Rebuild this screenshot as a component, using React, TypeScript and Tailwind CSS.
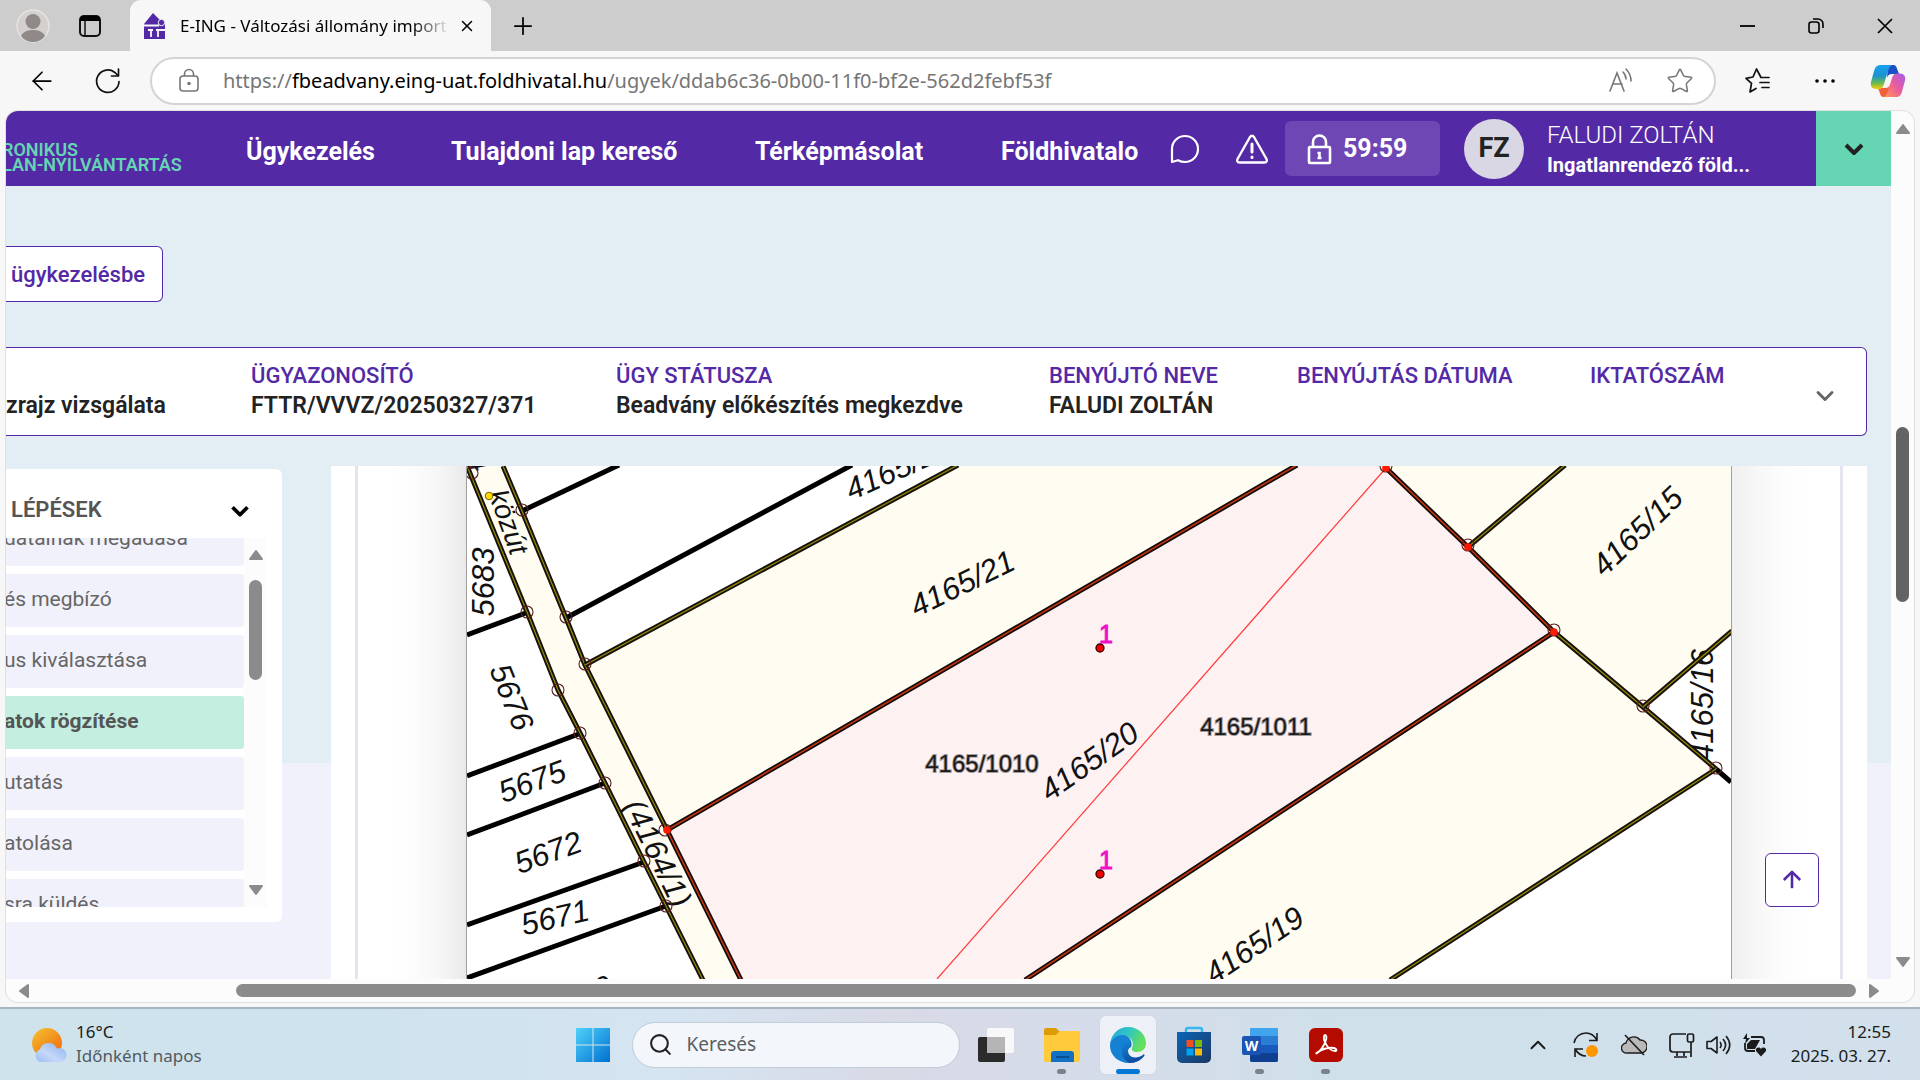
import React from "react";
import { ArrowLeft, ArrowUp, ChevronDown, ChevronUp, Plus, Search, Star, X } from "lucide-react";

const uiFont = "font-['Noto_Sans',sans-serif]";
const siteFont = "font-['Roboto',sans-serif]";

function TriUp({ className = "" }: { className?: string }) {
  return (
    <svg className={className} width="16" height="12" viewBox="0 0 16 12">
      <path d="M8 2 14 10H2Z" fill="#8b8b8b" stroke="#8b8b8b" strokeWidth="2" strokeLinejoin="round" />
    </svg>
  );
}

function TabStrip() {
  return (
    <div className="flex h-[51px] shrink-0 items-center bg-[#cdcdcd]">
      <button aria-label="Profil" className="ml-4 flex h-[34px] w-[34px] shrink-0 items-center justify-center">
        <svg width="34" height="34" viewBox="0 0 34 34">
          <circle cx="17" cy="17" r="16" fill="#d3d0ce" stroke="#e6e4e2" strokeWidth="1.5" />
          <circle cx="17" cy="12.500" r="7.500" fill="#8f8a87" />
          <path d="M5 27c2-4 6-6 12-6s10 2 12 6c-3 4-7 6-12 6s-9-2-12-6Z" fill="#8f8a87" />
        </svg>
      </button>
      <button aria-label="Munkaterületek" className="ml-7 flex shrink-0">
        <svg width="24" height="24" viewBox="0 0 24 24">
          <rect x="2" y="2" width="20" height="20" rx="4" fill="none" stroke="#111" strokeWidth="2" />
          <path d="M2 7V5a3 3 0 0 1 3-3h14a3 3 0 0 1 3 3v2Z" fill="#000" />
          <path d="M7 7v15" stroke="#111" strokeWidth="1.500" />
        </svg>
      </button>
      <div className="ml-[28px] flex h-full w-[361px] shrink-0 items-center rounded-t-[11px] bg-[#f7f7f7] pl-[13px] pr-[15px]">
        <svg width="22" height="26" viewBox="0 0 22 26" className="shrink-0">
          <path d="M1 11 10 0l7 7 5 3v16H1Z" fill="#5429a6" />
          <circle cx="18.500" cy="9.500" r="3.200" fill="#5429a6" stroke="#f7f7f7" />
          <path d="M0 12.500h16M5 17h5M13 17h9M8 17v7M15 17v7" stroke="#f7f7f7" strokeWidth="1.800" fill="none" />
        </svg>
        <span className="ml-[15px] min-w-0 flex-1 overflow-hidden whitespace-nowrap text-[17px] text-black [mask-image:linear-gradient(90deg,#000_86%,transparent)]">
          E-ING - Változási állomány import
        </span>
        <button aria-label="Lap bezárása" className="ml-2">
          <X size={18} strokeWidth={2} />
        </button>
      </div>
      <button aria-label="Új lap" className="ml-[18px]">
        <Plus size={28} strokeWidth={1.5} />
      </button>
      <div className="ml-auto flex">
        <button aria-label="Kis méret" className="flex w-[68px] justify-center">
          <svg width="18" height="18" viewBox="0 0 18 18"><path d="M1 9h15" stroke="#000" strokeWidth="1.800" /></svg>
        </button>
        <button aria-label="Előző méret" className="flex w-[68px] justify-center">
          <svg width="18" height="18" viewBox="0 0 18 18" fill="none" stroke="#000" strokeWidth="1.600">
            <rect x="2" y="5" width="10" height="11" rx="2.500" />
            <path d="M6 2h5a5 5 0 0 1 5 5v4" />
          </svg>
        </button>
        <button aria-label="Bezárás" className="flex w-[70px] justify-center">
          <svg width="18" height="18" viewBox="0 0 18 18"><path d="m2 2 14 14M16 2 2 16" stroke="#000" strokeWidth="1.700" /></svg>
        </button>
      </div>
    </div>
  );
}

function Toolbar() {
  return (
    <div className="flex h-[59px] shrink-0 items-center bg-[#f7f7f7] pr-[14px]">
      <button aria-label="Vissza" className="ml-[27px]">
        <ArrowLeft size={30} strokeWidth={1.4} />
      </button>
      <button aria-label="Frissítés" className="ml-[37px]">
        <svg width="28" height="28" viewBox="0 0 28 28" fill="none" stroke="#111" strokeWidth="1.700" strokeLinecap="round" strokeLinejoin="round">
          <path d="M25 14.500A11.200 11.200 0 1 1 20.500 5.200L24 8.500" />
          <path d="M24.500 2v7h-7" />
        </svg>
      </button>
      <div className="ml-[28px] flex h-[48px] min-w-0 flex-1 items-center rounded-full border-2 border-[#d4d4d4] bg-white pl-[27px] pr-[20px]">
        <svg width="20" height="25" viewBox="0 0 20 25" fill="none" stroke="#767676" strokeWidth="1.600" className="shrink-0">
          <rect x="1" y="8" width="18" height="15" rx="3" />
          <path d="M5.500 8V6a4.500 4.500 0 0 1 9 0v2" />
          <circle cx="10" cy="15.500" r="1" fill="#767676" />
        </svg>
        <div role="textbox" aria-label="Cím" className="ml-[24px] min-w-0 flex-1 overflow-hidden whitespace-nowrap text-[20px] text-[#767676]">
          https://<span className="text-black">fbeadvany.eing-uat.foldhivatal.hu</span>/ugyek/ddab6c36-0b00-11f0-bf2e-562d2febf53f
        </div>
        <button aria-label="Felolvasás">
          <svg width="26" height="28" viewBox="0 0 26 28" fill="none" stroke="#767676" strokeWidth="1.600" strokeLinecap="round">
            <path d="m2 24 7-18 7 18M5 17h9M15 5c2 2 3 4 3 7M18 2c3 3 5 7 5 12" />
          </svg>
        </button>
        <button aria-label="Kedvenc" className="ml-[32px]">
          <Star size={28} strokeWidth={1.3} color="#767676" />
        </button>
      </div>
      <button aria-label="Kedvencek" className="ml-[28px]">
        <svg width="28" height="28" viewBox="0 0 28 28" fill="none" stroke="#111" strokeWidth="1.700" strokeLinejoin="round" strokeLinecap="round">
          <path d="M17 10.500 12.500 2 9 10l-7 1.300 5.500 5L6 25l6-3.500M17 10.500h8M16 15.500h9M18 20.500h7" />
        </svg>
      </button>
      <button aria-label="Beállítások" className="ml-[42px]">
        <svg width="22" height="22" viewBox="0 0 22 22"><circle cx="3" cy="11" r="1.800" /><circle cx="11" cy="11" r="1.800" /><circle cx="19" cy="11" r="1.800" /></svg>
      </button>
      <button aria-label="Copilot" className="ml-[34px]">
        <svg width="36" height="34" viewBox="0 0 36 34">
          <defs>
            <linearGradient id="cpA" x1="0" y1="0" x2="0" y2="1"><stop offset="0" stopColor="#18a0ec" /><stop offset=".45" stopColor="#1b93cf" /><stop offset=".75" stopColor="#6cbb4c" /><stop offset="1" stopColor="#f5cd0a" /></linearGradient>
            <linearGradient id="cpB" x1="1" y1="0" x2="0" y2="1"><stop offset="0" stopColor="#a05cf0" /><stop offset=".5" stopColor="#ec5c9a" /><stop offset="1" stopColor="#ff9a55" /></linearGradient>
          </defs>
          <path d="M18 1h5c3 0 3.500 2 4.500 5l1.500 4h-7c-3 0-4 1-5 4Z" fill="#1a4fc8" />
          <path d="M18 33h-4c-3 0-3.500-2-4.500-5L8 24h7c3 0 4-1 5-4Z" fill="#f2613c" />
          <path d="M10 1h12c-2 1-3 3-4 6l-4 13c-1 3-2 5-5 5H6c-4 0-6-3-5-7L4 7c1-4 3-6 6-6Z" fill="url(#cpA)" />
          <path d="M26 33H14c2-1 3-3 4-6l4-13c1-3 2-4.500 5-4.500h3c4 0 6 3 5 7l-3 11c-1 4-3 5.500-6 5.500Z" fill="url(#cpB)" />
        </svg>
      </button>
    </div>
  );
}

function SiteHeader() {
  return (
    <header className="flex h-[75px] shrink-0 items-stretch bg-[#5429a6] text-white">
      <div className="-ml-1 w-[244px] shrink-0 whitespace-nowrap pt-[31px] text-[18px] font-semibold leading-[15px] text-[#66d5b3]">
        <div>RONIKUS</div>
        <div>LAN-NYILVÁNTARTÁS</div>
      </div>
      <nav className="flex min-w-0 flex-1 items-center overflow-hidden whitespace-nowrap pt-[7px] text-[25px] font-bold">
        <a href="#ugykezeles" className="w-[205px] shrink-0">Ügykezelés</a>
        <a href="#tulajdoni" className="w-[304px] shrink-0">Tulajdoni lap kereső</a>
        <a href="#terkep" className="w-[246px] shrink-0">Térképmásolat</a>
        <a href="#foldhivatalok" className="shrink-0">Földhivatalo</a>
      </nav>
      <div className="flex shrink-0 items-center">
        <button aria-label="Üzenetek" className="ml-5">
          <svg width="32" height="32" viewBox="0 0 32 32" fill="none" stroke="#fff" strokeWidth="2.200" strokeLinejoin="round">
            <path d="M3 29V16A13 13 0 1 1 16 29c-2.500 0-5-.7-7-1.800Z" />
          </svg>
        </button>
        <button aria-label="Figyelmeztetések" className="ml-[34px]">
          <svg width="34" height="32" viewBox="0 0 34 32" fill="none" stroke="#fff" strokeWidth="2.400" strokeLinejoin="round" strokeLinecap="round">
            <path d="M15 4 2.500 26c-1 2 0 3.500 2 3.500h25c2 0 3-1.500 2-3.500L19 4c-1-1.700-3-1.700-4 0Z" />
            <path d="M17 11v8M17 24v.5" strokeWidth="3" />
          </svg>
        </button>
        <div className="ml-4 flex h-[55px] w-[155px] items-center rounded-md bg-[#6e47b5] pl-[22px] text-[25px] font-bold">
          <svg width="26" height="32" viewBox="0 0 26 32" fill="none" stroke="#fff" strokeWidth="2.600">
            <rect x="2" y="14" width="21" height="16" rx="1" />
            <path d="M6 14V9a6.500 6.500 0 0 1 13 0v5M12.500 19v6M10.500 20h3M10.500 25h4" />
          </svg>
          <span className="ml-[10px]">59:59</span>
        </div>
        <div className="ml-6 flex h-[60px] w-[60px] items-center justify-center rounded-full bg-[#d9d7e3] text-[27px] font-bold text-[#222]">FZ</div>
        <div className="ml-[23px] w-[269px] whitespace-nowrap">
          <div className="pb-1 text-[24px] font-light leading-[28px]">FALUDI ZOLTÁN</div>
          <div className="text-[20px] font-bold leading-[24px]">Ingatlanrendező föld...</div>
        </div>
        <button aria-label="Profil menü" className="flex h-full w-[75px] items-center justify-center bg-[#66d5b3] text-[#222]">
          <ChevronDown size={32} strokeWidth={3} strokeLinecap="butt" />
        </button>
      </div>
    </header>
  );
}

const facts = [
  { label: "ÜGYAZONOSÍTÓ", value: "FTTR/VVVZ/20250327/371", w: "w-[365px]" },
  { label: "ÜGY STÁTUSZA", value: "Beadvány előkészítés megkezdve", w: "w-[433px]" },
  { label: "BENYÚJTÓ NEVE", value: "FALUDI ZOLTÁN", w: "w-[248px]" },
  { label: "BENYÚJTÁS DÁTUMA", value: "", w: "w-[293px]" },
  { label: "IKTATÓSZÁM", value: "", w: "w-[140px]" },
];

function CaseBar() {
  return (
    <section className="mr-6 flex h-[89px] shrink-0 items-center whitespace-nowrap rounded-r-md border border-l-0 border-[#5429a6] bg-white pb-[2px] text-[23px] font-semibold leading-[30px] text-[#222]">
      <div className="w-[245px] shrink-0 pt-[30px]">zrajz vizsgálata</div>
      {facts.map((f) => (
        <div key={f.label} className={`${f.w} shrink-0`}>
          <div className="text-[22px] font-medium text-[#5429a6]">{f.label}</div>
          <div className="h-[30px]">{f.value}</div>
        </div>
      ))}
      <button aria-label="Részletek" className="ml-auto mr-[27px] pt-[11px] text-[#666]">
        <ChevronDown size={28} strokeWidth={2.5} />
      </button>
    </section>
  );
}

const steps = [
  { t: "datainak megadása" },
  { t: "és megbízó" },
  { t: "us kiválasztása" },
  { t: "atok rögzítése", on: true },
  { t: "utatás" },
  { t: "atolása" },
  { t: "sra küldés" },
];

function Sidebar() {
  return (
    <aside className="mt-[3px] flex h-[453px] w-[276px] shrink-0 flex-col rounded-r-md bg-white pb-[15px]">
      <div className="flex h-[69px] items-center justify-between pl-[5px] pr-[27px] pt-3">
        <h2 className="text-[22px] font-semibold text-[#555]">LÉPÉSEK</h2>
        <button aria-label="Lépések összecsukása" className="pt-[2px]"><ChevronDown size={30} strokeWidth={3} strokeLinecap="butt" /></button>
      </div>
      <div className="flex min-h-0 flex-1">
        <ol className="flex w-[238px] flex-col justify-start gap-2 overflow-hidden">
          {steps.map((s, i) => (
            <li
              key={s.t}
              className={`flex h-[53px] shrink-0 items-center whitespace-nowrap rounded-r-[3px] pb-[2px] text-[21px] ${i === 0 ? "-mt-[25px]" : ""} ${s.on ? "bg-[#c4eee0] font-bold text-[#555]" : "bg-[#f1f1fb] text-[#666]"}`}
            >
              <span className="-ml-[2px]">{s.t}</span>
            </li>
          ))}
        </ol>
        <div className="flex w-[23px] flex-col items-center bg-[#fcfcfc] py-[11px]">
          <TriUp />
          <div className="mt-[19px] h-[100px] w-[13px] rounded-full bg-[#8b8b8b]" />
          <TriUp className="mt-auto rotate-180" />
        </div>
      </div>
    </aside>
  );
}

const blackLines = [
  "M467 635 527 612.500", "M467 776 580 733.500", "M467 835 605 783", "M467 925 644 862", "M467 978 666 906",
  "M522 511 619 465", "M566 618 852 465", "M1716 769 1731 782",
];
const yellowLines = [
  "M467 466 527 612 558 690 580 733 605 783 644 862 666 906 703 980",
  "M503 466 522 511 566 618 585 665 667 830",
  "M585 665 958 465", "M1468 547 1565 465", "M1554 632 1643 707 1716 769", "M1643 707 1732 631", "M1716 769 1390 980",
];
const redLines = ["M741 980 667 830 1297 465", "M1386 468 1468 547 1554 632 1025 980"];
const nodes = [
  [472, 473], [522, 510], [527, 612], [566, 617], [585, 664], [558, 690], [580, 733], [605, 783], [665, 830],
  [644, 861], [666, 906], [1386, 466], [1468, 545], [1554, 630], [1643, 706], [1716, 768],
];
const redNodes = [[667, 830], [1386, 468], [1468, 547], [1554, 632]];
const parcels: [string, number, number, number][] = [
  ["5683", 483, 582, -90], ["5676", 512, 697, 68], ["5675", 532, 781, -20], ["5672", 548, 852, -20], ["5671", 555, 917, -13],
  ["5670", 578, 996, -20], ["4165/22", 898, 468, -24], ["4165/21", 962, 583, -26], ["4165/20", 1089, 761, -35],
  ["4165/19", 1254, 945, -34], ["4165/15", 1637, 531, -44], ["4165/16", 1702, 705, -90], ["(4164/1)", 658, 853, 64],
  ["5684", 470, 438, 68],
];

function ParcelMap() {
  return (
    <svg viewBox="467 466 1264 513" preserveAspectRatio="xMidYMin slice" className="h-full w-full font-['Liberation_Sans',sans-serif]" role="img" aria-label="Térképvázlat">
      <rect x="467" y="466" width="1264" height="513" fill="#fff" />
      <path d="M467 466H503L522 511 566 618 585 665 667 830 741 979H703L666 906 644 862 605 783 580 733 558 690 527 612Z" fill="#fffcf1" />
      <path d="M585 665 958 465H1731V632L1643 707 1716 769 1390 980H741L667 830Z" fill="#fffdf1" />
      <path d="M667 830 1297 465H1384L1468 547 1554 632 1025 980H741Z" fill="#fef1f1" />
      {parcels.map(([t, x, y, r]) => (
        <text key={t} transform={`translate(${x} ${y}) rotate(${r})`} textAnchor="middle" y="11" fontSize="31" fontStyle="italic" fill="#111">{t}</text>
      ))}
      <text transform="translate(508 522) rotate(70)" textAnchor="middle" y="9" fontSize="28" fontStyle="italic" fill="#111">közút</text>
      {blackLines.map((d) => <path key={d} d={d} stroke="#000" strokeWidth="5" fill="none" />)}
      {yellowLines.map((d) => (
        <g key={d} fill="none"><path d={d} stroke="#14120a" strokeWidth="5" /><path d={d} stroke="#9a8a08" strokeWidth="1.200" /></g>
      ))}
      {redLines.map((d) => (
        <g key={d} fill="none"><path d={d} stroke="#140a0a" strokeWidth="5" /><path d={d} stroke="#c8380c" strokeWidth="1.500" /></g>
      ))}
      <path d="M1386 468 937 979" stroke="#ff3a3a" strokeWidth="1.200" />
      {nodes.map(([x, y]) => <circle key={`${x}-${y}`} cx={x} cy={y} r="6" fill="none" stroke="#5a1c1c" strokeWidth="1.100" />)}
      {redNodes.map(([x, y]) => <circle key={`${x}-${y}`} cx={x} cy={y} r="3.800" fill="#ff1a00" />)}
      <circle cx="489" cy="496" r="3.800" fill="#ffd900" stroke="#7a6500" />
      {[648, 874].map((y) => (
        <g key={y}>
          <circle cx="1100" cy={y} r="4" fill="#f00000" stroke="#300" strokeWidth="1.300" />
          <text x="1106" y={y - 5} textAnchor="middle" fontSize="25" fill="#f010c8" stroke="#f010c8" strokeWidth="1">1</text>
        </g>
      ))}
      <g textAnchor="middle" fontSize="24" fill="#1a1a1a" stroke="#000" strokeOpacity=".35" strokeWidth="2" paintOrder="stroke">
        <text x="982" y="772">4165/1010</text>
        <text x="1256" y="735">4165/1011</text>
      </g>
    </svg>
  );
}

function Content() {
  return (
    <div className="flex min-h-0 flex-1 bg-[linear-gradient(#e3eef4_297px,#f1f1fb_297px)]">
      <Sidebar />
      <main className="relative ml-[49px] mr-6 flex min-w-0 flex-1 bg-white px-6">
        <div className="flex min-w-0 flex-1 border-x-[3px] border-[#e4e3f0]">
          <div className="w-[108px] shrink-0 bg-[linear-gradient(270deg,#e9e9e9,#f6f6f6_25px,#fdfdfd_55px,#fff_80px)]" />
          <div className="min-w-0 flex-1 border-x border-[#a0a0a0]"><ParcelMap /></div>
          <div className="w-[108px] shrink-0 bg-[linear-gradient(90deg,#f0f0f0,#f7f7f7_25px,#fdfdfd_55px,#fff_80px)]" />
        </div>
        <button aria-label="Vissza a tetejére" className="absolute bottom-[72px] right-[48px] flex h-[54px] w-[54px] items-center justify-center rounded-md border border-[#5429a6] bg-white text-[#5429a6]">
          <ArrowUp size={28} strokeWidth={2.2} strokeLinecap="butt" />
        </button>
      </main>
    </div>
  );
}

function Viewport() {
  return (
    <div className={`${siteFont} mx-[6px] mb-[5px] mt-px flex min-h-0 flex-1 flex-col overflow-hidden rounded-xl bg-[#fcfcfc] shadow-[0_0_0_1px_#e0e0e0]`}>
      <div className="flex min-h-0 flex-1">
        <div className="flex min-w-0 flex-1 flex-col overflow-hidden bg-[#e3eef4]">
          <SiteHeader />
          <div className="shrink-0 pb-[45px] pt-[60px]">
            <button className="h-[56px] rounded-r-md border border-l-0 border-[#5429a6] bg-white pl-[5px] pr-[17px] text-[22px] font-medium text-[#5429a6]">ügykezelésbe</button>
          </div>
          <CaseBar />
          <div className="h-[30px] shrink-0" />
          <Content />
        </div>
        <div className="flex w-[23px] shrink-0 flex-col items-center pb-[11px] pt-3">
          <TriUp />
          <div className="mt-[292px] h-[175px] w-[13px] rounded-full bg-[#636363]" />
          <TriUp className="mt-auto rotate-180" />
        </div>
      </div>
      <div className="flex h-[23px] shrink-0 items-center pl-[10px] pr-[32px]">
        <TriUp className="-rotate-90" />
        <div className="ml-[204px] h-[13px] flex-1 rounded-full bg-[#8b8b8b]" />
        <TriUp className="ml-[10px] rotate-90" />
      </div>
    </div>
  );
}

function AppButton({ label, children, state = "" }: { label: string; children: React.ReactNode; state?: "" | "open" | "active" }) {
  return (
    <button
      aria-label={label}
      className={`relative flex h-[58px] w-[56px] items-center justify-center rounded-md ${state === "active" ? "bg-[#edf1f7] shadow-[0_0_0_1px_#d3d9e2]" : ""}`}
    >
      {children}
      {state === "active" && <span className="absolute bottom-0 h-[5px] w-6 rounded-full bg-[#0078d4]" />}
      {state === "open" && <span className="absolute bottom-0 h-[5px] w-[9px] rounded-full bg-[#7b8288]" />}
    </button>
  );
}

function Taskbar() {
  return (
    <footer className="grid h-[73px] shrink-0 grid-cols-[1fr_auto_1fr] items-center border-t-2 border-[#a7b5c0] bg-[linear-gradient(90deg,#cfe3ed_0%,#cfe3ee_20%,#d5e4f1_35%,#d8dae6_46%,#d5dce9_58%,#cfe0ea_70%,#d2e0ec_100%)]">
      <button className="flex items-center pl-[31px] text-left">
        <svg width="36" height="36" viewBox="0 0 36 36">
          <defs>
            <linearGradient id="sun" x1="0" y1="0" x2=".8" y2="1"><stop offset="0" stopColor="#f3c432" /><stop offset="1" stopColor="#f2690e" /></linearGradient>
            <linearGradient id="cloud" x1="1" y1="0" x2="0" y2="1"><stop offset="0" stopColor="#88b0f0" /><stop offset=".6" stopColor="#c5d8f8" /><stop offset="1" stopColor="#9cbcf3" /></linearGradient>
          </defs>
          <circle cx="16" cy="16" r="15" fill="url(#sun)" />
          <path d="M10 35a6.500 6.500 0 0 1-1-12.500 9 9 0 0 1 17-1A7 7 0 1 1 28 35Z" fill="url(#cloud)" />
        </svg>
        <span className="ml-[9px] pb-[2px] text-[17px] leading-[24px] text-[#1b1b1b]">
          <span className="block">16°C</span>
          <span className="block text-[#525a60]">Időnként napos</span>
        </span>
      </button>
      <div className="flex items-center gap-[10px] pl-2">
        <button aria-label="Start" className="mr-[11px] flex">
          <svg width="36" height="36" viewBox="0 0 36 36">
            <defs><linearGradient id="win" x1="0" y1="0" x2="1" y2="1"><stop offset="0" stopColor="#4fd2fb" /><stop offset="1" stopColor="#0070cf" /></linearGradient></defs>
            <path d="M1 1h16.500v16.500H1ZM18.500 1H35v16.500H18.500ZM1 18.500h16.500V35H1ZM18.500 18.500H35V35H18.500Z" fill="url(#win)" />
          </svg>
        </button>
        <label className="mr-[-2px] flex h-[46px] w-[328px] items-center rounded-full border border-[#c0ccd8] bg-[#f3f6fa] px-[15px]">
          <Search size={25} strokeWidth={2} className="shrink-0 text-[#222]" />
          <input aria-label="Keresés" placeholder="Keresés" className="ml-[14px] w-full min-w-0 bg-transparent text-[19px] outline-none placeholder:text-[#5a5f64]" />
        </label>
        <AppButton label="Feladatnézet">
          <svg width="38" height="38" viewBox="0 0 38 38">
            <rect x="1" y="11" width="27" height="25" rx="2" fill="#2b2b2b" />
            <rect x="10" y="2" width="27" height="25" rx="2" fill="#f8f8f8" />
            <rect x="10" y="11" width="18" height="16" fill="#b5b5b5" />
          </svg>
        </AppButton>
        <AppButton label="Fájlkezelő" state="open">
          <svg width="38" height="38" viewBox="0 0 38 38">
            <path d="M1 4a2 2 0 0 1 2-2h10l4 4-4 5H1Z" fill="#dd9c06" />
            <path d="M1 9h12l4-4h19a1 1 0 0 1 1 1v28a2 2 0 0 1-2 2H3a2 2 0 0 1-2-2Z" fill="#ffcb3d" />
            <path d="M8 36V28a3 3 0 0 1 3-3h17a3 3 0 0 1 3 3v8Z" fill="#1271c4" />
            <path d="M13 31h13" stroke="#0a4d92" strokeWidth="2" />
          </svg>
        </AppButton>
        <AppButton label="Edge" state="active">
          <svg width="38" height="38" viewBox="0 0 38 38">
            <defs>
              <linearGradient id="edA" x1="0" y1="0" x2="1" y2=".4"><stop offset="0" stopColor="#22a5dc" /><stop offset=".5" stopColor="#2fc5c4" /><stop offset="1" stopColor="#66e05a" /></linearGradient>
              <linearGradient id="edB" x1="0" y1="0" x2=".4" y2="1"><stop offset="0" stopColor="#1789d9" /><stop offset="1" stopColor="#0d4c9e" /></linearGradient>
            </defs>
            <path d="M1 20C1 9 9 1 19 1c11 0 18 8 18 16 0 6-4 9-9 9-4 0-6-2-5-4 2-3 1-11-7-12C9 9 2 14 1 20Z" fill="url(#edA)" />
            <path d="M1 20c0-6 6-11 12-11 7 0 11 6 9 12-6-3-8 8-1 11 5 2 10 0 13-3 1-1 2 0 1 1-3 4-8 7-15 7C9 37 1 29 1 20Z" fill="#1680d4" />
            <path d="M13 24c0-6 3-9 6-10 3 1 4 4 3 7-5 2-3 8 1 10 4 1 8 0 11-2 1-1 2 0 1 1-3 4-8 7-14 7-4-1-8-6-8-13Z" fill="url(#edB)" />
          </svg>
        </AppButton>
        <AppButton label="Store">
          <svg width="38" height="38" viewBox="0 0 38 38">
            <defs><linearGradient id="st" x1="0" y1="0" x2="1" y2="1"><stop offset="0" stopColor="#0b66b8" /><stop offset="1" stopColor="#1c3763" /></linearGradient></defs>
            <path d="M11 8V4a2 2 0 0 1 2-2h12a2 2 0 0 1 2 2v4" fill="none" stroke="#35b8f0" strokeWidth="2.500" />
            <path d="M2 6h34v26a5 5 0 0 1-5 5H7a5 5 0 0 1-5-5Z" fill="url(#st)" />
            <path d="M11.500 14h7v7h-7Z" fill="#f25022" /><path d="M20 14h7v7h-7Z" fill="#7fba00" />
            <path d="M11.500 22.500h7v7h-7Z" fill="#00a4ef" /><path d="M20 22.500h7v7h-7Z" fill="#ffb900" />
          </svg>
        </AppButton>
        <AppButton label="Word" state="open">
          <svg width="38" height="38" viewBox="0 0 38 38">
            <rect x="9" y="2" width="28" height="34" rx="2" fill="#2b7cd3" />
            <path d="M9 10V4a2 2 0 0 1 2-2h24a2 2 0 0 1 2 2v6Z" fill="#41a5ee" />
            <path d="M9 19h28v8H9Z" fill="#185abd" /><path d="M9 27h28v7a2 2 0 0 1-2 2H11a2 2 0 0 1-2-2Z" fill="#103f91" />
            <rect x="1" y="10" width="19" height="19" rx="2" fill="#1a55b4" />
            <text x="10.500" y="25" textAnchor="middle" fontSize="14" fontWeight="700" fill="#fff">W</text>
          </svg>
        </AppButton>
        <AppButton label="Acrobat" state="open">
          <svg width="36" height="36" viewBox="0 0 36 36">
            <rect x="1" y="1" width="34" height="34" rx="6" fill="#b30b00" />
            <path d="M9 26c3-1 7-7 9-13 1-3 0-5-1-5s-2 3 0 7c2 5 6 9 10 9 2 0 2-2-1-3-5-1-12 1-16 4-2 1-2 2-1 1Z" fill="none" stroke="#fff" strokeWidth="1.900" strokeLinejoin="round" />
          </svg>
        </AppButton>
      </div>
      <div className="flex items-center justify-end pr-[29px] text-[#1b1b1b]">
        <button aria-label="Rejtett ikonok"><ChevronUp size={26} strokeWidth={1.8} /></button>
        <svg className="ml-[22px]" width="26" height="28" viewBox="0 0 26 28" fill="none" stroke="#1b1b1b" strokeWidth="1.600">
          <path d="M1 12C2 6 7 2 13 2c5 0 8 2 11 7M24 2v7.500h-8M2 26v-8h8M2 18c3 5 6 7 11 7" />
          <circle cx="19" cy="20" r="6" fill="#ff9800" stroke="none" />
        </svg>
        <svg className="ml-[22px]" width="26" height="22" viewBox="0 0 26 22">
          <path d="M6 19a5 5 0 0 1-1-10 8 8 0 0 1 14-3 6.500 6.500 0 0 1 1 13Z" fill="#b9b9b9" stroke="#1b1b1b" strokeWidth="1.300" />
          <path d="m4 1 19 20" stroke="#1b1b1b" strokeWidth="1.600" />
        </svg>
        <svg className="ml-[22px]" width="26" height="28" viewBox="0 0 26 28" fill="none" stroke="#1b1b1b" strokeWidth="1.700">
          <path d="M17 3H4a3 3 0 0 0-3 3v12a3 3 0 0 0 3 3h17M8 21v4M15 21v4M5 26h13M22 11v15" />
          <rect x="18.500" y="3" width="6" height="8" rx="1.500" />
        </svg>
        <svg className="ml-[10px]" width="26" height="24" viewBox="0 0 26 24" fill="none" stroke="#1b1b1b" strokeWidth="1.600" strokeLinejoin="round">
          <path d="M2 8.500h4L12 4v16l-6-4.500H2ZM15 9c1.500 2 1.500 4 0 6M18 6c3.500 4 3.500 8 0 12M21 3c5 6 5 12 0 18" />
        </svg>
        <svg className="ml-[11px]" width="26" height="26" viewBox="0 0 26 26">
          <path d="M9 5h10a3 3 0 0 1 3 3v4M3 11v5a3 3 0 0 0 3 3h7" fill="none" stroke="#1b1b1b" strokeWidth="1.800" />
          <path d="M9 8h9l-5 9H5V12ZM5 1 1 7h3l-1 5 5-6H5Z" fill="#1b1b1b" />
          <path d="M19 24.500 14 19c-1-3 3-5 5-2 2-3 6-1 5 2Z" fill="#1b1b1b" />
        </svg>
        <button className="ml-[23px] pb-[2px] text-right text-[17px] leading-[24px]">
          <span className="block">12:55</span>
          <span className="block">2025. 03. 27.</span>
        </button>
      </div>
    </footer>
  );
}

export default function App() {
  return (
    <div className={`${uiFont} flex h-screen min-w-0 flex-col overflow-hidden bg-[#f7f7f7]`}>
      <TabStrip />
      <Toolbar />
      <Viewport />
      <Taskbar />
    </div>
  );
}
